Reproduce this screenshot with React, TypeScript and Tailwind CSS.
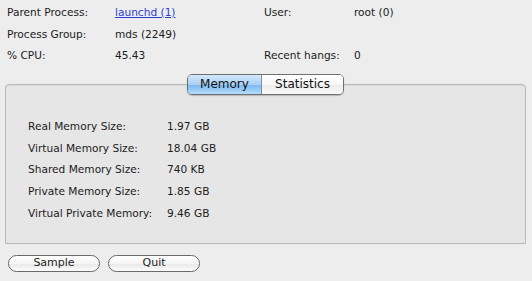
import React from "react";

const font = { fontFamily: '"Lucida Grande", "DejaVu Sans", sans-serif' };

function Row({ label, value }: { label: string; value: string }) {
  return (
    <div className="flex h-[21.75px] items-center">
      <div className="w-[139px] shrink-0">{label}</div>
      <div>{value}</div>
    </div>
  );
}

export default function App() {
  return (
    <div
      className="w-[532px] h-[281px] bg-[#ededed] text-[10.6px] text-[#1c1c1c] overflow-hidden"
      style={font}
    >
      <div className="pt-[2px] pl-[7px] grid grid-cols-[108px_149px_90px_1fr] auto-rows-[21.7px] items-center">
        <div>Parent Process:</div>
        <div>
          <span className="text-[#2c3fd6] underline">launchd (1)</span>
        </div>
        <div>User:</div>
        <div>root (0)</div>
        <div>Process Group:</div>
        <div>mds (2249)</div>
        <div></div>
        <div></div>
        <div>% CPU:</div>
        <div>45.43</div>
        <div>Recent hangs:</div>
        <div>0</div>
      </div>

      <div className="mt-[6.9px] ml-[5px] w-[521px]">
        <div className="relative z-10 flex justify-center">
          <div className="flex h-[21px] rounded-[5px] border border-[#6f6f6f] overflow-hidden text-[12px] shadow-[0_1px_1px_rgba(0,0,0,0.2)]">
            <div className="w-[74px] flex items-center justify-center bg-[linear-gradient(to_bottom,#d4e8fb_0%,#a9d0f5_50%,#7ab8f0_51%,#b4dcfc_100%)] border-r border-[#7f8fa6] text-[#111]">
              Memory
            </div>
            <div className="w-[81px] flex items-center justify-center bg-[linear-gradient(to_bottom,#ffffff_0%,#f7f7f7_50%,#ececec_51%,#fafafa_100%)] text-[#111]">
              Statistics
            </div>
          </div>
        </div>
        <div className="-mt-[11px] h-[160px] border border-[#b8b8b8] rounded-t-[4px] bg-[#e6e6e6] pt-[31px] pl-[22px] shadow-[inset_0_1px_1px_rgba(0,0,0,0.05)]">
          <Row label="Real Memory Size:" value="1.97 GB" />
          <Row label="Virtual Memory Size:" value="18.04 GB" />
          <Row label="Shared Memory Size:" value="740 KB" />
          <Row label="Private Memory Size:" value="1.85 GB" />
          <Row label="Virtual Private Memory:" value="9.46 GB" />
        </div>
      </div>

      <div className="mt-[11px] ml-[8px] flex gap-[8px]">
        <div className="w-[92px] h-[17px] rounded-full border border-[#6a6a6a] bg-[linear-gradient(to_bottom,#ffffff_0%,#f4f4f4_50%,#e8e8e8_51%,#fcfcfc_100%)] flex items-center justify-center text-[11px]">
          Sample
        </div>
        <div className="w-[92px] h-[17px] rounded-full border border-[#6a6a6a] bg-[linear-gradient(to_bottom,#ffffff_0%,#f4f4f4_50%,#e8e8e8_51%,#fcfcfc_100%)] flex items-center justify-center text-[11px]">
          Quit
        </div>
      </div>
    </div>
  );
}
